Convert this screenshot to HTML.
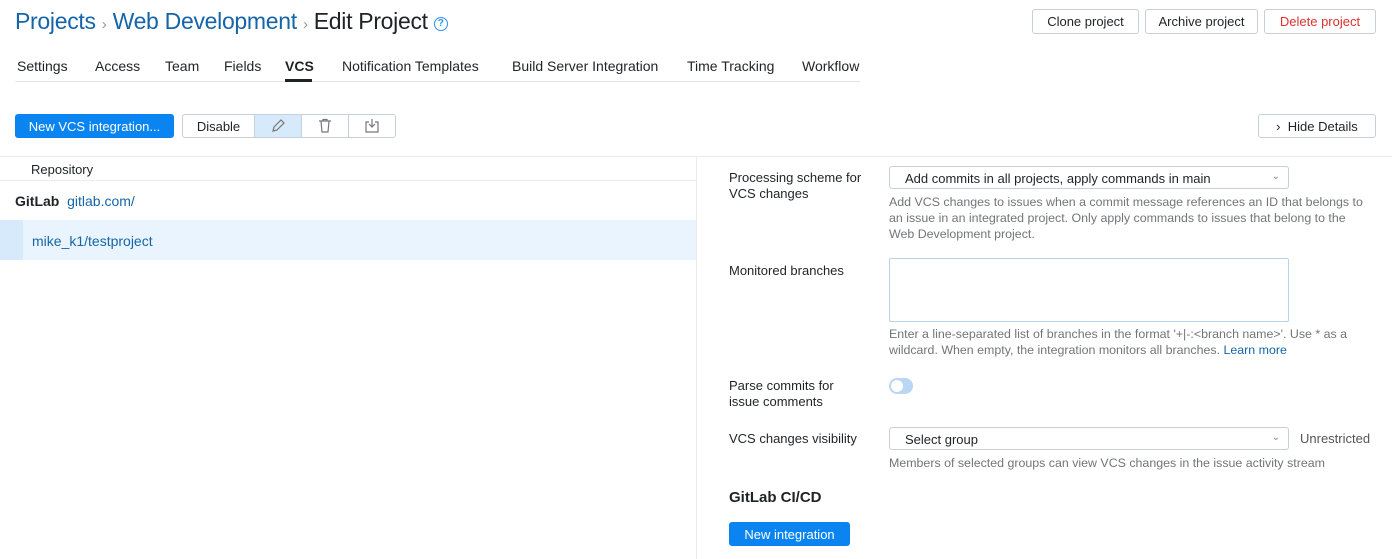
<!DOCTYPE html>
<html><head><style>
*{box-sizing:border-box}
body{margin:0;width:1392px;height:559px;overflow:hidden;background:#fff;font-family:"Liberation Sans",sans-serif;color:#1f2326;position:relative;font-size:13px}
.a{position:absolute;white-space:nowrap}
.btn{position:absolute;border:1px solid #c5d0dc;border-radius:3px;background:#fff;font-size:13px;display:flex;align-items:center;justify-content:center}
.tab{position:absolute;top:58px;font-size:14px}
.lbl{position:absolute;left:729px;font-size:13px;line-height:16px}
.hint{position:absolute;left:889px;font-size:12.4px;color:#737577;line-height:16px}
.sel{position:absolute;left:889px;width:400px;height:23px;border:1px solid #c5d0dc;border-radius:3px;font-size:13px;padding:4px 15px}
</style></head><body>
<div class="a" style="left:15px;top:8px;font-size:23px;letter-spacing:-0.3px;color:#1565a8">Projects <span style="color:#999;font-size:15px">›</span> Web Development <span style="color:#999;font-size:15px">›</span> <span style="color:#1f2326">Edit Project</span> <span style="display:inline-block;vertical-align:3px;width:14px;height:14px;border:1.5px solid #2b8ff0;border-radius:50%;font-size:10px;color:#2b8ff0;text-align:center;line-height:11px;font-weight:bold;letter-spacing:0">?</span></div>
<div class="btn" style="left:1032px;top:9px;width:107px;height:25px">Clone project</div>
<div class="btn" style="left:1145px;top:9px;width:113px;height:25px">Archive project</div>
<div class="btn" style="left:1264px;top:9px;width:112px;height:25px;color:#e0302d">Delete project</div>
<div class="tab" style="left:17px">Settings</div>
<div class="tab" style="left:95px">Access</div>
<div class="tab" style="left:165px">Team</div>
<div class="tab" style="left:224px">Fields</div>
<div class="tab" style="left:285px;font-weight:bold">VCS</div>
<div class="tab" style="left:342px">Notification Templates</div>
<div class="tab" style="left:512px">Build Server Integration</div>
<div class="tab" style="left:687px">Time Tracking</div>
<div class="tab" style="left:802px">Workflow</div>
<div class="a" style="left:15px;top:81px;width:845px;height:1px;background:#dfe5eb"></div>
<div class="a" style="left:285px;top:79px;width:27px;height:3px;background:#1f2326"></div>
<div class="btn" style="left:15px;top:114px;width:159px;height:24px;background:#0a84f0;border-color:#0a84f0;color:#fff">New VCS integration...</div>
<div class="btn" style="left:182px;top:114px;width:73px;height:24px;border-radius:3px 0 0 3px">Disable</div>
<div class="btn" style="left:254px;top:114px;width:48px;height:24px;border-radius:0;background:#d6eafc">
<svg width="16" height="16" viewBox="0 0 16 16" fill="none" stroke="#777" stroke-width="1.2"><path d="M3 13l1-4 7-7 3 3-7 7z M3 13l4-1"/></svg></div>
<div class="btn" style="left:301px;top:114px;width:48px;height:24px;border-radius:0">
<svg width="16" height="16" viewBox="0 0 16 16" fill="none" stroke="#777" stroke-width="1.2"><path d="M2 3h12M6 3V1.5h4V3M4 3l1 11h6l1-11"/></svg></div>
<div class="btn" style="left:348px;top:114px;width:48px;height:24px;border-radius:0 3px 3px 0">
<svg width="16" height="16" viewBox="0 0 16 16" fill="none" stroke="#777" stroke-width="1.2"><path d="M5 4H2v10h12V4h-3M8 1v8M5 6l3 3 3-3"/></svg></div>
<div class="btn" style="left:1258px;top:114px;width:118px;height:24px">› &nbsp;Hide Details</div>
<div class="a" style="left:0;top:156px;width:1392px;height:1px;background:#e8ecf0"></div>
<div class="a" style="left:31px;top:162px;font-size:13px">Repository</div>
<div class="a" style="left:0;top:180px;width:696px;height:1px;background:#e8ecf0"></div>
<div class="a" style="left:15px;top:193px;font-size:14px"><b>GitLab</b>&nbsp; <span style="color:#1565a8">gitlab.com/</span></div>
<div class="a" style="left:0;top:220px;width:696px;height:40px;background:#e9f4fe"></div>
<div class="a" style="left:0;top:220px;width:23px;height:40px;background:#d6eafc"></div>
<div class="a" style="left:32px;top:233px;font-size:14px;color:#1565a8">mike_k1/testproject</div>
<div class="a" style="left:696px;top:156px;width:1px;height:403px;background:#e8ecf0"></div>
<div class="lbl" style="top:170px">Processing scheme for<br>VCS changes</div>
<div class="sel" style="top:166px">Add commits in all projects, apply commands in main<span style="position:absolute;right:8px;color:#888;font-size:10px">⌄</span></div>
<div class="hint" style="top:194px">Add VCS changes to issues when a commit message references an ID that belongs to<br>an issue in an integrated project. Only apply commands to issues that belong to the<br>Web Development project.</div>
<div class="lbl" style="top:263px">Monitored branches</div>
<div class="a" style="left:889px;top:258px;width:400px;height:64px;border:1px solid #b8d2ea;border-radius:2px"></div>
<div class="hint" style="top:326px">Enter a line-separated list of branches in the format '+|-:&lt;branch name&gt;'. Use * as a<br>wildcard. When empty, the integration monitors all branches. <span style="color:#1565a8">Learn more</span></div>
<div class="lbl" style="top:378px">Parse commits for<br>issue comments</div>
<div class="a" style="left:889px;top:378px;width:24px;height:16px;border-radius:8px;background:#b9d6f2"><div style="position:absolute;left:2px;top:2px;width:12px;height:12px;border-radius:50%;background:#fff"></div></div>
<div class="lbl" style="top:431px">VCS changes visibility</div>
<div class="sel" style="top:427px">Select group<span style="position:absolute;right:8px;color:#888;font-size:10px">⌄</span></div>
<div class="a" style="left:1300px;top:431px;font-size:13px;color:#555">Unrestricted</div>
<div class="hint" style="top:455px">Members of selected groups can view VCS changes in the issue activity stream</div>
<div class="a" style="left:729px;top:489px;font-size:15px;font-weight:bold">GitLab CI/CD</div>
<div class="btn" style="left:729px;top:522px;width:121px;height:24px;background:#0a84f0;border-color:#0a84f0;color:#fff">New integration</div>
</body></html>
